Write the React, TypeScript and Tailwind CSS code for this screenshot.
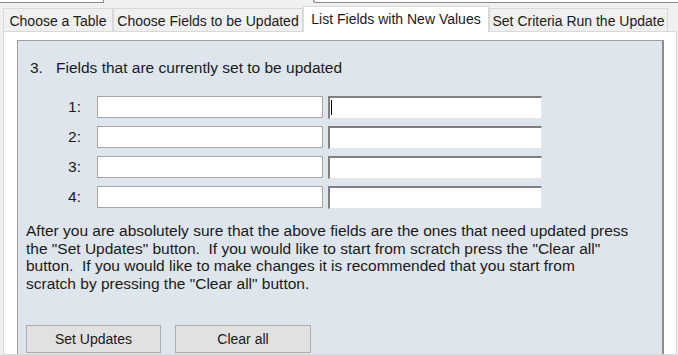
import React from "react";

const tabs = [
  { label: "Choose a Table", w: "w-[110px]", active: false },
  { label: "Choose Fields to be Updated", w: "w-[190px]", active: false },
  { label: "List Fields with New Values", w: "w-[186px]", active: true },
  { label: "Set Criteria Run the Update", w: "w-[179px]", active: false },
];

export default function App() {
  return (
    <div
      className="w-[678px] h-[355px] overflow-hidden bg-[#f0f0f0] flex flex-col text-[#1a1a1a]"
      style={{ fontFamily: '"Liberation Sans", Arial, sans-serif' }}
    >
      {/* cut-off controls at the top */}
      <div className="h-[6px] flex shrink-0">
        <div className="w-[104px] h-[3px] bg-white border-b border-r border-[#8a8a8a]" />
        <div className="ml-[209px] flex-1 h-[3px] bg-white border-b border-l border-[#8a8a8a] rounded-bl-[3px]" />
      </div>

      {/* tab strip */}
      <div className="h-[25px] flex items-end pl-[3px] shrink-0 relative z-10">
        {tabs.map((t) =>
          t.active ? (
            <div
              key={t.label}
              className={`${t.w} h-[26px] bg-white border border-b-0 border-[#d9d9d9] flex items-start justify-center pt-[4px] text-[14px] leading-[16px] -mb-[1px]`}
            >
              {t.label}
            </div>
          ) : (
            <div
              key={t.label}
              className={`${t.w} h-[23px] bg-[#f0f0f0] border border-b-0 border-[#d9d9d9] flex items-center justify-center text-[14px] leading-[16px] pt-[2px]`}
            >
              {t.label}
            </div>
          )
        )}
      </div>

      {/* tab page */}
      <div className="flex-1 ml-[3px] mr-[1px] bg-white border border-[#d9d9d9] pt-[8px] pl-[13px] pr-[12px] flex flex-col">
        <div className="flex-1 bg-[#dfe5ec] border-t border-l border-[#a0a0a0] border-r-2 border-r-[#8c8c8c] pl-[8px] pt-[19px]">
          <div className="flex text-[15.5px] leading-[16px] ml-[4px]">
            <span className="w-[26px]">3.</span>
            <span>Fields that are currently set to be updated</span>
          </div>

          <div className="mt-[20px] flex flex-col gap-[8px]">
            {[1, 2, 3, 4].map((n) => (
              <div key={n} className="flex items-center h-[22px]">
                <div className="w-[55px] text-right text-[15.5px] leading-[16px]">{n}:</div>
                <div className="ml-[16px] w-[226px] h-[22px] bg-white border border-[#a7a7a7]" />
                <div className="ml-[5px] w-[214px] h-[23px] bg-white border-t-2 border-l-2 border-[#7f7f7f] border-r border-b border-r-[#e6e6e6] border-b-[#e6e6e6] relative">
                  {n === 1 && <div className="absolute left-[1px] top-[2px] w-[1px] h-[15px] bg-black" />}
                </div>
              </div>
            ))}
          </div>

          <div className="mt-[14px] text-[15.5px] leading-[17.7px]">
            <div>After you are absolutely sure that the above fields are the ones that need updated press</div>
            <div>the "Set Updates" button.&nbsp; If you would like to start from scratch press the "Clear all"</div>
            <div>button.&nbsp; If you would like to make changes it is recommended that you start from</div>
            <div>scratch by pressing the "Clear all" button.</div>
          </div>

          <div className="mt-[32px] flex gap-[14px]">
            <button className="w-[135px] h-[28px] bg-[#e1e1e1] border border-[#adadad] text-[14px] leading-[16px] text-[#1a1a1a]">
              Set Updates
            </button>
            <button className="w-[136px] h-[28px] bg-[#e1e1e1] border border-[#adadad] text-[14px] leading-[16px] text-[#1a1a1a]">
              Clear all
            </button>
          </div>
        </div>
      </div>
    </div>
  );
}
